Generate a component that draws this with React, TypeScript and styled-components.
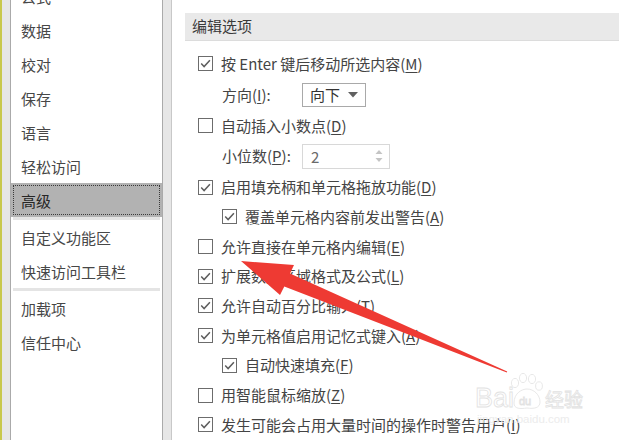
import React from 'react';
import styled, { createGlobalStyle, css } from 'styled-components';

const GlobalStyle = createGlobalStyle`
  html, body {
    margin: 0;
    padding: 0;
    overflow: hidden;
    background: #e6e6e6;
  }
  * {
    box-sizing: border-box;
  }
`;

const navGroups: string[][] = [
  ['公式', '数据', '校对', '保存', '语言', '轻松访问', '高级'],
  ['自定义功能区', '快速访问工具栏'],
  ['加载项', '信任中心'],
];

type Option =
  | { kind: 'check'; text: string; key: string; checked: boolean; indent?: boolean }
  | { kind: 'select'; text: string; key: string; value: string }
  | { kind: 'spin'; text: string; key: string; value: string };

const options: Option[] = [
  { kind: 'check', text: '按 Enter 键后移动所选内容', key: 'M', checked: true },
  { kind: 'select', text: '方向', key: 'I', value: '向下' },
  { kind: 'check', text: '自动插入小数点', key: 'D', checked: false },
  { kind: 'spin', text: '小位数', key: 'P', value: '2' },
  { kind: 'check', text: '启用填充柄和单元格拖放功能', key: 'D', checked: true },
  { kind: 'check', text: '覆盖单元格内容前发出警告', key: 'A', checked: true, indent: true },
  { kind: 'check', text: '允许直接在单元格内编辑', key: 'E', checked: false },
  { kind: 'check', text: '扩展数据区域格式及公式', key: 'L', checked: true },
  { kind: 'check', text: '允许自动百分比输入', key: 'T', checked: true },
  { kind: 'check', text: '为单元格值启用记忆式键入', key: 'A', checked: true },
  { kind: 'check', text: '自动快速填充', key: 'F', checked: true, indent: true },
  { kind: 'check', text: '用智能鼠标缩放', key: 'Z', checked: false },
  { kind: 'check', text: '发生可能会占用大量时间的操作时警告用户', key: 'I', checked: true },
];

const ACTIVE = '高级';

const App = () => {
  return (
    <Screen>
      <GlobalStyle />
      <Nav>
        <NavList>
          {navGroups.map((group, gi) => (
            <React.Fragment key={gi}>
              {gi > 0 && <NavSeparator />}
              {group.map((item) => (
                <NavItem key={item} $active={item === ACTIVE}>
                  {item}
                </NavItem>
              ))}
            </React.Fragment>
          ))}
        </NavList>
      </Nav>
      <Gutter />
      <Content>
        <SectionHeader>编辑选项</SectionHeader>
        <Options>
          {options.map((opt, i) => {
            if (opt.kind === 'check') {
              return (
                <Row key={i} $indent={opt.indent}>
                  <CheckBox>
                    {opt.checked && (
                      <svg width="13" height="13" viewBox="0 0 13 13">
                        <polyline
                          points="2.2,6.6 5.1,9.6 10.9,3.2"
                          fill="none"
                          stroke="#5e5e5e"
                          strokeWidth="1.5"
                        />
                      </svg>
                    )}
                  </CheckBox>
                  <Label>
                    {opt.text}(<Key>{opt.key}</Key>)
                  </Label>
                </Row>
              );
            }
            return (
              <Row key={i} $tall>
                <FieldLabel>
                  {opt.text}(<Key>{opt.key}</Key>):
                </FieldLabel>
                {opt.kind === 'select' ? (
                  <SelectBox>
                    <span>{opt.value}</span>
                    <svg width="10" height="6" viewBox="0 0 10 6">
                      <polygon points="0,0 10,0 5,5.5" fill="#606060" />
                    </svg>
                  </SelectBox>
                ) : (
                  <SpinBox>
                    <span>{opt.value}</span>
                    <SpinArrows>
                      <svg width="8" height="14" viewBox="0 0 8 14">
                        <polygon points="0.5,5 7.5,5 4,1" fill="#c4c4c4" />
                        <polygon points="0.5,9 7.5,9 4,13" fill="#c4c4c4" />
                      </svg>
                    </SpinArrows>
                  </SpinBox>
                )}
              </Row>
            );
          })}
        </Options>
      </Content>

      <Overlay width="619" height="440" viewBox="0 0 619 440">
        <polygon
          points="249,261 302,265 298,273.5 515.2,371.5 514.8,372.5 292.3,286.5 288,295"
          fill="#ee3a33"
        />
      </Overlay>

      <Watermark width="124" height="62" viewBox="0 0 124 62">
        <g fill="#ffffff" stroke="#e2e2e2" strokeWidth="0.8">
          <text x="3" y="38" fontSize="27" fontFamily="'Liberation Sans', sans-serif">
            Bai
          </text>
          <ellipse cx="43" cy="14" rx="3.6" ry="4.6" />
          <ellipse cx="51" cy="9" rx="3.6" ry="4.6" />
          <ellipse cx="60" cy="10" rx="3.6" ry="4.6" />
          <ellipse cx="67" cy="17" rx="3.4" ry="4.2" />
          <path d="M42 34 C42 24, 50 20, 55 20 C62 20, 68 26, 68 33 C68 39, 62 40, 55 39 C48 40, 42 40, 42 34 Z" />
          <text x="47" y="36" fontSize="11" fontFamily="'Liberation Sans', sans-serif">
            du
          </text>
          <text x="73" y="38" fontSize="19" fontFamily="'Noto Sans CJK SC', sans-serif">
            经验
          </text>
        </g>
        <text
          x="5"
          y="54"
          fontSize="11.5"
          fill="#ececec"
          fontFamily="'Liberation Sans', sans-serif"
        >
          jingyan.baidu.com
        </text>
      </Watermark>
    </Screen>
  );
};

const uiFont = `'Noto Sans CJK SC', 'Noto Sans', sans-serif`;

const Screen = styled.div`
  position: relative;
  width: 619px;
  height: 440px;
  display: flex;
  overflow: hidden;
  background: #e6e6e6;
  border-left: 2px solid #c8c84c;
  padding-left: 8px;
  font-family: ${uiFont};
`;

const Nav = styled.nav`
  width: 153px;
  flex-shrink: 0;
  height: 100%;
  background: #ffffff;
  border-left: 1px solid #aaaaaa;
  border-right: 1px solid #aaaaaa;
  overflow: hidden;
`;

const NavList = styled.div`
  margin-top: -21px;
  display: flex;
  flex-direction: column;
`;

const NavItem = styled.div<{ $active?: boolean }>`
  height: 34px;
  display: flex;
  align-items: center;
  padding-left: 10px;
  font-size: 15px;
  color: #474747;
  ${(p) =>
    p.$active &&
    css`
      background: #b2b2b2;
      color: #262626;
      outline: 1px dotted #3a3a3a;
      outline-offset: -3px;
    `}
`;

const NavSeparator = styled.div`
  height: 3px;
  margin: 0 2px;
  background: #e4e4e4;
`;

const Gutter = styled.div`
  width: 8px;
  flex-shrink: 0;
`;

const Content = styled.main`
  flex: 1;
  height: 100%;
  background: #ffffff;
  border-left: 1px solid #c8c8c8;
  padding: 13px 0 0 13px;
`;

const SectionHeader = styled.div`
  height: 28px;
  display: flex;
  align-items: center;
  padding-left: 7px;
  padding-bottom: 2px;
  background: #e9e9e9;
  border-bottom: 1px solid #dcdcdc;
  font-size: 15px;
  color: #3a3a3a;
`;

const Options = styled.div`
  margin-top: 8px;
  padding-left: 13px;
  display: flex;
  flex-direction: column;
`;

const Row = styled.div<{ $indent?: boolean; $tall?: boolean }>`
  height: ${(p) => (p.$tall ? '32px' : '29.7px')};
  display: flex;
  align-items: center;
  padding-left: ${(p) => (p.$indent ? '24px' : '0')};
  font-size: 15px;
  color: #444444;
  white-space: nowrap;
`;

const CheckBox = styled.span`
  width: 15px;
  height: 15px;
  flex-shrink: 0;
  border: 1px solid #6c6c6c;
  background: #ffffff;
  margin-right: 8px;
  display: flex;
  align-items: center;
  justify-content: center;
`;

const Label = styled.span`
  line-height: 20px;
`;

const Key = styled.span`
  text-decoration: underline;
  text-underline-offset: 2px;
`;

const FieldLabel = styled.span`
  width: 80px;
  margin-left: 24px;
  line-height: 20px;
`;

const SelectBox = styled.div`
  width: 64px;
  height: 24px;
  border: 1px solid #a9a9a9;
  display: flex;
  align-items: center;
  justify-content: space-between;
  padding: 0 7px 0 7px;
  color: #333333;
  font-size: 15px;
`;

const SpinBox = styled.div`
  width: 88px;
  height: 25px;
  border: 1px solid #d8d8d8;
  display: flex;
  align-items: center;
  justify-content: space-between;
  padding: 0 6px 0 8px;
  color: #6a6a6a;
  font-size: 15px;
`;

const SpinArrows = styled.span`
  display: flex;
  align-items: center;
`;

const Overlay = styled.svg`
  position: absolute;
  left: -10px;
  top: 0;
  pointer-events: none;
`;

const Watermark = styled.svg`
  position: absolute;
  left: 470px;
  top: 369px;
  pointer-events: none;
`;

export default App;
